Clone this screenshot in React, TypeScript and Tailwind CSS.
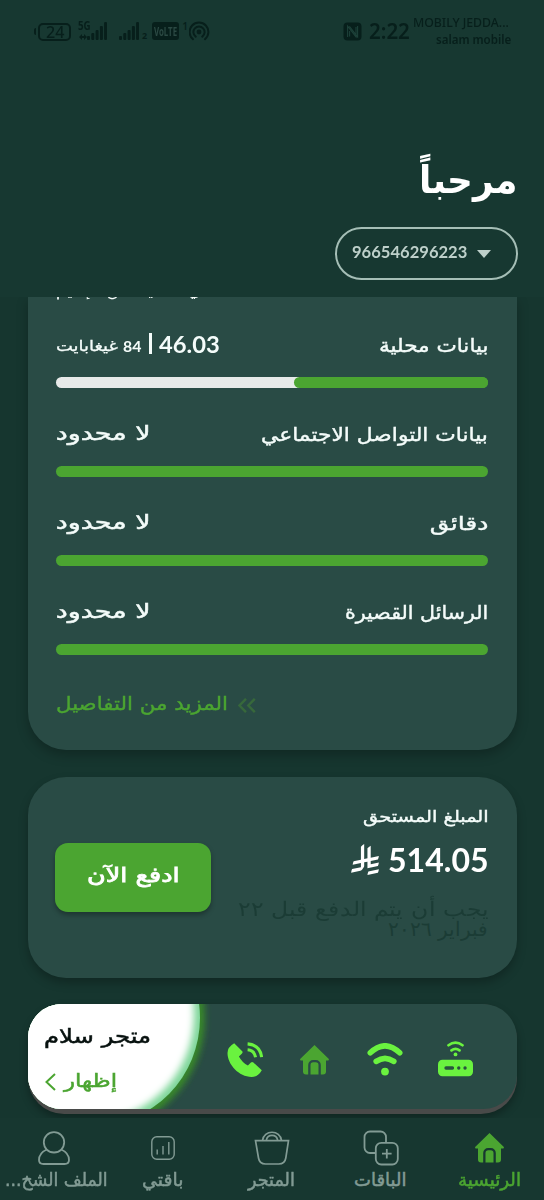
import { useLayoutEffect, useRef, useState, type ReactNode } from 'react';

type FitProps = { w: number; className?: string; dir?: 'rtl' | 'ltr'; children: ReactNode };

/** One line of text, condensed or widened to take exactly `w` pixels. */
function Fit({ w, className = '', dir = 'rtl', children }: FitProps) {
  const ref = useRef<HTMLSpanElement>(null);
  const [scale, setScale] = useState(1);
  useLayoutEffect(() => {
    if (ref.current && ref.current.offsetWidth) setScale(w / ref.current.offsetWidth);
  }, [w]);
  return (
    <span dir={dir} className={`block shrink-0 text-start ${className}`} style={{ width: w }}>
      <span
        ref={ref}
        className={`inline-block whitespace-nowrap ${dir === 'rtl' ? 'origin-right' : 'origin-left'}`}
        style={{ transform: `scaleX(${scale})` }}
      >
        {children}
      </span>
    </span>
  );
}

function Signal() {
  return (
    <svg className="h-[20px] w-[20px]" viewBox="0 0 20 20" fill="currentColor">
      <rect x="0" y="15" width="3" height="4" rx="1" />
      <rect x="4.3" y="12" width="3" height="7" rx="1" />
      <rect x="8.6" y="9" width="3" height="10" rx="1" />
      <rect x="12.9" y="5" width="3" height="14" rx="1" />
      <rect x="17.1" y="1" width="2.9" height="18" rx="1" />
    </svg>
  );
}

function StatusBar() {
  return (
    <div dir="ltr" className="flex h-[60px] shrink-0 items-start pl-[34px] text-[#071f1b]">
      <div className="mt-[22px] flex h-[19px] items-center gap-[2px]">
        <span className="h-[7px] w-[2px] rounded-l bg-current" />
        <span className="flex h-[18px] w-[33px] items-center justify-center rounded-[5px] border-2 border-current">
          <Fit w={18} dir="ltr" className="font-['Noto_Sans',sans-serif] text-[17px] leading-[18px] font-medium">24</Fit>
        </span>
      </div>
      <div className="relative mt-[21px] ml-[16px] h-[20px] w-[22px]">
        <Signal />
        <Fit w={13} dir="ltr" className="absolute -top-px -left-[9px] font-['Noto_Sans',sans-serif] text-[12px] leading-[12px] font-bold">5G</Fit>
        <svg className="absolute top-[13px] -left-[8px] h-[6px] w-[8px]" viewBox="0 0 8 6" fill="currentColor">
          <path d="M0 3 3 0v2h1v2H3v2zM8 3 5 0v2H4v2h1v2z" />
        </svg>
      </div>
      <div className="mt-[21px] ml-[10px]"><Signal /></div>
      <span className="mt-[30px] ml-[3px] font-['Noto_Sans',sans-serif] text-[9px] leading-[12px] font-bold">2</span>
      <span className="mt-[22px] ml-[5px] flex h-[18px] w-[27px] items-center justify-center rounded-[3px] bg-current">
        <Fit w={23} dir="ltr" className="font-['Noto_Sans',sans-serif] text-[13px] leading-[18px] font-bold"><span className="text-[#2b4943]">VoLTE</span></Fit>
      </span>
      <span className="mt-[20px] ml-[3px] font-['Noto_Sans',sans-serif] text-[10px] leading-[12px] font-semibold">1</span>
      <svg className="mt-[20px] ml-px h-[21px] w-[22px]" viewBox="0 0 22 21" fill="none" stroke="currentColor" strokeWidth="2" strokeLinecap="round">
        <circle cx="10" cy="12" r="2.4" fill="currentColor" stroke="none" />
        <path d="M6.7 16.6a5.6 5.6 0 1 1 6.6 0M4 19.2a9.4 9.4 0 1 1 12 0" />
      </svg>
      <svg className="mt-[22px] ml-[132px] h-[19px] w-[19px]" viewBox="0 0 19 19">
        <rect x=".5" y=".5" width="18" height="18" rx="4" fill="currentColor" />
        <path d="M4.6 15V4.2l8.4 10.6V5M14.6 4v10.8L6.4 4.4M6.6 14.6V9" fill="none" stroke="#1d4139" strokeWidth="1.1" />
      </svg>
      <Fit w={41} dir="ltr" className="mt-[19px] ml-[7px] font-['Noto_Sans',sans-serif] text-[21px] leading-[24px] font-semibold">2:22</Fit>
      <div className="mt-[15px] ml-[4px] flex w-[97px] flex-col items-end">
        <Fit w={96} dir="ltr" className="mr-[2px] font-['Noto_Sans',sans-serif] text-[12px] leading-[16px] font-medium">MOBILY JEDDA...</Fit>
        <Fit w={75} dir="ltr" className="font-['Noto_Sans',sans-serif] text-[12px] leading-[17px] font-semibold">salam mobile</Fit>
      </div>
    </div>
  );
}

function UsageRow({ label, labelWidth, used = 0, children }: { label: string; labelWidth: number; used?: number; children: ReactNode }) {
  return (
    <div className="flex h-[89px] shrink-0 flex-col justify-end">
      <div className="flex h-[40px] items-start justify-between">
        <Fit w={labelWidth} className="mt-[-5px] text-[19px] leading-[26px] [-webkit-text-stroke:0.4px]">{label}</Fit>
        {children}
      </div>
      <div className={`flex h-[11px] w-[432px] rounded-full ${used ? 'bg-linear-to-r from-[#e7eae9] from-60% to-[#4ba531] to-60%' : ''}`}>
        <div className="h-full rounded-full bg-[#4ba531]" style={{ width: `${100 - used}%` }} />
      </div>
    </div>
  );
}

const Unlimited = () => (
  <Fit w={94} className="mt-[-7px] text-[20px] leading-[28px] [-webkit-text-stroke:0.5px]">لا محدود</Fit>
);

function Home({ className }: { className: string }) {
  return (
    <svg className={className} viewBox="0 0 29 30" fill="#4ba531">
      <path d="M14.5 0 28.6 13.8c.7.8.2 1.8-.8 1.8H26v11a3 3 0 0 1-3 3h-2.2V20a5 5 0 0 0-5-5h-2.6a5 5 0 0 0-5 5v9.6H6a3 3 0 0 1-3-3v-11H1.2c-1 0-1.5-1-.8-1.8z" />
      <path d="M10.5 29.6V20a2.8 2.8 0 0 1 2.8-2.8h2.4a2.8 2.8 0 0 1 2.8 2.8v9.6z" />
    </svg>
  );
}

function Riyal() {
  return (
    <svg className="mt-[6px] h-[31px] w-[28px]" viewBox="0 0 1124.14 1256.39" fill="currentColor">
      <path d="M699.62,1113.02h0c-20.06,44.48-33.32,92.75-38.4,143.37l424.51-90.24c20.06-44.47,33.31-92.75,38.4-143.37l-424.51,90.24Z" />
      <path d="M1085.73,895.8c20.06-44.47,33.32-92.75,38.4-143.37l-330.68,70.33v-135.2l292.27-62.11c20.06-44.47,33.32-92.75,38.4-143.37l-330.68,70.27V66.13c-50.67,28.45-95.67,66.32-132.25,110.99v403.35l-132.25,28.11V0c-50.67,28.44-95.67,66.32-132.25,110.99v525.69l-295.91,62.88c-20.06,44.47-33.33,92.75-38.42,143.37l334.33-71.05v170.26l-358.3,76.14c-20.06,44.47-33.32,92.75-38.4,143.37l375.04-79.7c30.53-6.35,56.77-24.4,73.83-49.24l68.78-101.97v-.02c7.14-10.55,11.3-23.27,11.3-36.97v-149.98l132.25-28.11v270.4l424.53-90.28Z" />
    </svg>
  );
}

function StoreCard() {
  return (
    <section className="mt-[26px] h-[109.5px] shrink-0 rounded-[36px] bg-[#494a49] shadow-[0_4px_8px_rgba(0,0,0,0.3)]">
      <div className="relative flex h-[104.5px] overflow-hidden rounded-[34px] bg-[#294b45]">
        <svg className="absolute inset-0 h-full w-full" viewBox="0 0 489 104.5">
          <defs>
            <filter id="glow" x="-20%" y="-20%" width="140%" height="140%"><feGaussianBlur stdDeviation="3" /></filter>
            <filter id="soft" x="-20%" y="-20%" width="140%" height="140%"><feGaussianBlur stdDeviation="3.5" /></filter>
            <clipPath id="disc"><ellipse cx="67" cy="14" rx="105" ry="107" /></clipPath>
          </defs>
          <ellipse cx="67" cy="14" rx="110" ry="113" fill="#38872a" filter="url(#glow)" />
          <g clipPath="url(#disc)">
            <rect width="180" height="105" fill="#7fd69a" />
            <ellipse cx="62" cy="11" rx="104" ry="106" fill="#fff" filter="url(#soft)" />
            <rect width="100" height="90" fill="#fff" />
            <rect width="84" height="105" fill="#fff" />
          </g>
        </svg>
        <div className="relative flex flex-1 items-center justify-between pt-[4px] pr-[44px]">
          <svg className="mt-[2px] h-[36px] w-[35px]" viewBox="0 0 35 36" fill="#6af23f">
            <rect y="18.8" width="35" height="16.4" rx="4.5" />
            <path d="M8 27h6.5M20.7 27h.1M27 27h.1" stroke="#29533f" strokeWidth="3.3" strokeLinecap="round" />
            <circle cx="17.5" cy="13.4" r="1.9" />
            <path d="M13.5 9.4q4-3.2 8 0M10.5 4.3q7-5.4 14 0" stroke="#6af23f" strokeWidth="2.7" fill="none" strokeLinecap="round" />
          </svg>
          <svg className="mt-[3px] h-[33px] w-[36px]" viewBox="0 0 36 33" fill="none" stroke="#6af23f" strokeWidth="5.6" strokeLinecap="round">
            <path d="M3.3 9.8Q18-4 32.7 9.8M9.2 18.4q8.8-6.2 17.6 0" />
            <circle cx="18" cy="28.6" r="3.9" fill="#6af23f" stroke="none" />
          </svg>
          <div className="flex w-[36px] justify-center"><Home className="mt-[4px] h-[30px] w-[29px]" /></div>
          <svg className="mt-[4px] h-[36px] w-[36px]" viewBox="0 0 36 36">
            <path d="M7.2 1.2 15 9q1.2 1.2 0 2.4l-3.1 3q3.3 6 9 9.2l3-3.1q1.2-1.1 2.5 0l8.4 7.7q-3.7 6.7-10.2 6.7C12 34.9.5 22.5.5 11q0-6 6.7-9.8z" fill="#6af23f" />
            <path d="M20.6 7.7q6.7.5 8 7.5M20.6 1.9q12.6.9 14 13.3" stroke="#6af23f" strokeWidth="3.1" fill="none" />
          </svg>
        </div>
        <div className="relative w-[199px] shrink-0 pt-[16px]">
          <div className="flex justify-end pl-[17px]">
            <Fit w={107} className="text-[20px] leading-[32px] text-[#07110f] [-webkit-text-stroke:0.5px]">متجر سلام</Fit>
          </div>
          <div className="mt-[13px] flex items-center justify-end gap-[9px] pl-[17px] text-[#4ba531]">
            <Fit w={53} className="text-[19px] leading-[30px] [-webkit-text-stroke:0.5px]">إظهار</Fit>
            <svg className="mt-[4px] h-[18px] w-[11px]" viewBox="0 0 11 18" fill="none" stroke="currentColor" strokeWidth="2"><path d="m10 1-8.5 8 8.5 8" /></svg>
          </div>
        </div>
      </div>
    </section>
  );
}

function NavItem({ label, w, active = false, labelClass = '', children }: { label: string; w: number; active?: boolean; labelClass?: string; children: ReactNode }) {
  return (
    <div className={`flex w-[109px] shrink-0 flex-col items-center ${active ? 'text-[#4ba531]' : 'text-[#829b94]'}`}>
      <div className="flex h-[36px] items-center justify-center">{children}</div>
      <Fit w={w} className={`mt-[1px] text-[18px] leading-[26px] [-webkit-text-stroke:0.5px] ${labelClass}`}>{label}</Fit>
    </div>
  );
}

export default function App() {
  return (
    <div dir="rtl" className="flex h-[1200px] w-[544px] flex-col overflow-hidden bg-[#16362f] font-['DejaVu_Sans',sans-serif] text-[#f4fcfa]">
      <header className="flex h-[297px] shrink-0 flex-col bg-[#173831]">
        <StatusBar />
        <div className="mt-[90px] flex pr-[27px]">
          <Fit w={98} className="text-[38px] leading-[60px] font-bold text-white">مرحباً</Fit>
        </div>
        <div className="mt-[17px] mr-[26px] flex h-[53px] w-[183px] items-center rounded-full border-2 border-[#a5beb6] pr-[25px] text-[#bed0ca]">
          <svg className="h-[8px] w-[14px]" viewBox="0 0 14 8" fill="currentColor"><path d="M0 0h14L7 8z" /></svg>
          <Fit w={115} dir="ltr" className="mr-[10px] mb-[3px] font-[Lato,sans-serif] text-[17px] leading-[24px] font-bold">966546296223</Fit>
        </div>
      </header>

      <main className="flex min-h-0 flex-1 flex-col overflow-hidden px-[27.5px]">
        <section className="relative flex h-[453px] shrink-0 flex-col rounded-b-[38px] bg-[#294b45] px-[28.5px] pt-[2px] shadow-[0_5px_12px_rgba(0,0,0,0.25)]">
          <div className="absolute top-0 left-[28px] h-[6px] overflow-hidden">
            <Fit w={154} className="-mt-[17px] text-[14px] leading-[22px]">في المدينة من الإقليم</Fit>
          </div>
          <UsageRow label="بيانات محلية" labelWidth={109} used={55}>
            <div className="mt-[-10px] flex items-center" dir="ltr">
              <Fit w={62} className="mt-[4px] text-[15px] leading-[28px] [-webkit-text-stroke:0.3px]">غيغابايت</Fit>
              <Fit w={18} dir="ltr" className="mt-[5px] ml-[5px] font-[Lato,sans-serif] text-[15px] leading-[28px] font-bold">84</Fit>
              <span className="ml-[8px] h-[21px] w-[2.5px] bg-current" />
              <Fit w={61} dir="ltr" className="ml-[7px] font-[Lato,sans-serif] text-[23px] leading-[28px] font-bold">46.03</Fit>
            </div>
          </UsageRow>
          <UsageRow label="بيانات التواصل الاجتماعي" labelWidth={227}><Unlimited /></UsageRow>
          <UsageRow label="دقائق" labelWidth={58}><Unlimited /></UsageRow>
          <UsageRow label="الرسائل القصيرة" labelWidth={143}><Unlimited /></UsageRow>
          <div className="mt-[34px] flex items-center justify-end gap-[10px] text-[#4ba531]">
            <svg className="mt-[4px] h-[15px] w-[18px] text-[#37683b]" viewBox="0 0 18 15" fill="none" stroke="currentColor" strokeWidth="2.4"><path d="M8 .8 1.5 7.5 8 14.2M16.8.8l-6.5 6.7 6.5 6.7" /></svg>
            <Fit w={172} className="text-[19px] leading-[28px] [-webkit-text-stroke:0.4px]">المزيد من التفاصيل</Fit>
          </div>
        </section>

        <section className="mt-[27px] flex h-[201px] shrink-0 items-start justify-between rounded-[38px] bg-[#294b45] pr-[28px] pl-[27.5px] shadow-[0_5px_10px_rgba(0,0,0,0.25)]">
          <div className="pt-[28px]">
            <Fit w={126} className="text-[16px] leading-[24px] [-webkit-text-stroke:0.4px]">المبلغ المستحق</Fit>
            <div className="mt-[9px] flex gap-[9px] text-white">
              <Fit w={101} dir="ltr" className="font-[Lato,sans-serif] text-[33px] leading-[42px] font-bold">514.05</Fit>
              <Riyal />
            </div>
            <div className="mt-[19px] text-[20px] leading-[20px] font-extralight text-[#1b3c35]">
              <Fit w={251}>يجب أن يتم الدفع قبل ٢٢</Fit>
              <Fit w={100}>فبراير ٢٠٢٦</Fit>
            </div>
          </div>
          <button className="mt-[66px] flex h-[69px] w-[156px] items-center justify-center rounded-[13px] bg-[#4ba531] pb-[5px] text-white shadow-[0_3px_5px_rgba(0,0,0,0.3)]">
            <Fit w={93} className="text-[20px] leading-[32px] [-webkit-text-stroke:0.8px]">ادفع الآن</Fit>
          </button>
        </section>

        <StoreCard />
      </main>

      <nav className="flex h-[82px] shrink-0 bg-[#173730] pt-[12px]">
        <NavItem label="الرئيسية" w={63} active><Home className="h-[30px] w-[29px]" /></NavItem>
        <NavItem label="الباقات" w={52}>
          <svg className="h-[36px] w-[36px]" viewBox="0 0 36 36" fill="none" stroke="currentColor" strokeWidth="1.8">
            <path d="M12.5 23H7a5.5 5.5 0 0 1-5.5-5.5V7A5.5 5.5 0 0 1 7 1.5h10.5A5.5 5.5 0 0 1 23 7v5.5" />
            <rect x="12.8" y="12.8" width="22" height="21.7" rx="5.5" />
            <path d="M19 23.7h9.6M23.8 19v9.5" />
          </svg>
        </NavItem>
        <NavItem label="المتجر" w={47}>
          <svg className="h-[34px] w-[36px]" viewBox="0 0 36 34" fill="none" stroke="currentColor" strokeWidth="1.7">
            <path d="M1.5 9.7h33L31.8 27q-1 6-7 6H11.5q-6 0-7-6z" />
            <path d="M8.5 9.5C9.5-1.5 26.5-1.5 27.5 9.5M12.3 9.5c1-6.8 10.4-6.8 11.4 0" />
          </svg>
        </NavItem>
        <NavItem label="باقتي" w={42}>
          <svg className="h-[24px] w-[24px]" viewBox="0 0 24 24" fill="none" stroke="currentColor" strokeWidth="1.4">
            <rect x=".8" y=".8" width="22.4" height="22.4" rx="5" />
            <path d="M6.2 13.5v5M12 10v8.5M17.8 6v12.5" />
          </svg>
        </NavItem>
        <NavItem label="الملف الشخ..." w={103} labelClass="-mr-[5px]">
          <svg className="h-[34px] w-[32px]" viewBox="0 0 32 34" fill="none" stroke="currentColor" strokeWidth="1.8">
            <circle cx="16" cy="11.3" r="10.2" />
            <path d="M8.8 18.5Q1 22 1 29q0 4 4.5 4h21q4.5 0 4.5-4 0-7-7.8-10.5" />
          </svg>
        </NavItem>
      </nav>
    </div>
  );
}
